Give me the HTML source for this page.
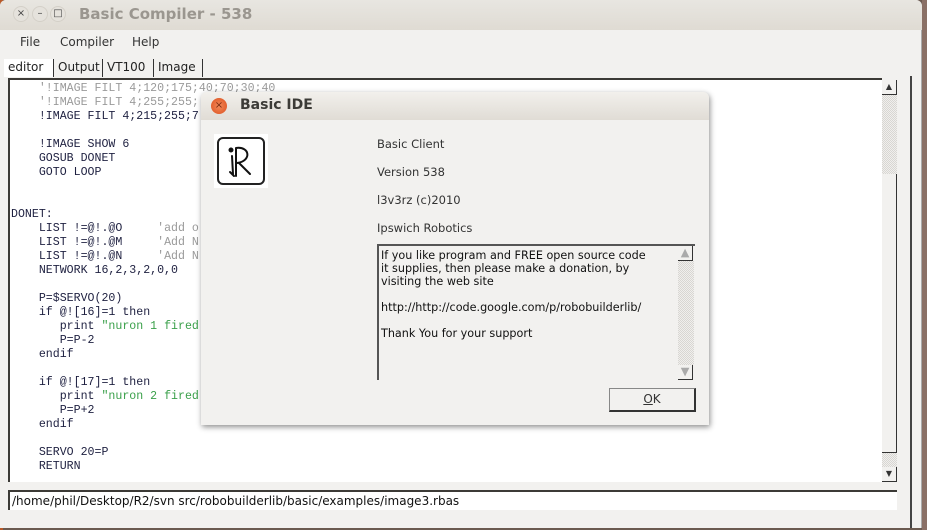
<!DOCTYPE html>
<html><head><meta charset="utf-8"><style>
*{margin:0;padding:0;box-sizing:border-box}
body{width:927px;height:530px;overflow:hidden;background:#6b5a50;position:relative;font-family:"DejaVu Sans","Liberation Sans",sans-serif}
.abs{position:absolute}
#win{left:0;top:0;width:922px;height:528px;background:#f2f1ef;border-radius:6px 6px 0 0;border-right:1px solid #aaa}
#title{left:0;top:0;width:922px;height:30px;background:linear-gradient(#e8e6e1,#dfdbd3);border-radius:6px 6px 0 0}
.wb{width:16px;height:16px;border-radius:50%;background:#e5e2dc;border:1px solid #d4d0c8;top:6px;font-size:10px;color:#444;text-align:center;line-height:14px}
#menu{left:0;top:30px;width:922px;height:22px;font-size:12px;color:#333}
.tab{top:59px;height:18px;font-size:12px;color:#222;border-right:1px solid #333;padding:1px 4px 0 4px}
#code{left:8px;top:78px;width:874px;height:404px;background:#fff;border-top:2px solid #3c3a36;border-left:2px solid #3c3a36;overflow:hidden}
#code pre{font-family:"Liberation Mono",monospace;font-size:11.6px;line-height:14px;color:#1e2040;position:absolute;left:1px;top:2px}
.c{color:#9a9a9a}.s{color:#3aa04a}
#sb{left:882px;top:80px;width:15px;height:402px;background:#f2f1ef}
.chk{background-image:repeating-conic-gradient(#d8d6d2 0 25%,#f0efed 0 50%);background-size:2px 2px}
.arr{width:15px;height:15px;background:#f2f1ef;border-right:1px solid #333;border-bottom:1px solid #333;font-size:8px;text-align:center;line-height:14px;color:#333}
#path{left:8px;top:490px;width:889px;height:20px;background:#fff;border-top:2px solid #3c3a36;border-left:2px solid #3c3a36;font-size:12px;color:#111;padding:2px 0 0 2px;font-family:"DejaVu Sans",sans-serif}
#dlg{left:201px;top:92px;width:508px;height:333px;background:#f2f1ef;border-radius:6px 6px 0 0;box-shadow:1px 2px 6px rgba(0,0,0,.45)}
#dt{left:0;top:0;width:508px;height:28px;background:linear-gradient(#f2f0ec,#e0dcd5);border-radius:6px 6px 0 0}
.lbl{left:176px;font-size:11.5px;color:#333}
#ta{left:176px;top:152px;width:318px;height:136px;border-top:2px solid #555;border-left:2px solid #555;background:#f2f1ef}
#ta div{font-size:11.2px;line-height:13px;color:#111;position:absolute;left:2px;top:3px;white-space:pre}
#ok{left:408px;top:296px;width:87px;height:24px;border:1px solid #888;border-right:2px solid #333;border-bottom:2px solid #333;font-size:12px;text-align:center;line-height:21px;color:#333}
</style></head><body>
<div class="abs" style="left:0;top:0;width:3px;height:530px;background:#b85a2a"></div>
<div class="abs" style="left:922px;top:0;width:5px;height:530px;background:#8a7066"></div>
<div id="win" class="abs">
 <div id="title" class="abs">
  <div class="abs wb" style="left:13px">×</div>
  <div class="abs wb" style="left:32px">–</div>
  <div class="abs wb" style="left:50px">□</div>
  <div class="abs" style="left:79px;top:5px;font-size:15px;font-weight:bold;color:#9a968f">Basic Compiler - 538</div>
 </div>
 <div id="menu" class="abs">
  <span class="abs" style="left:20px;top:5px">File</span>
  <span class="abs" style="left:60px;top:5px">Compiler</span>
  <span class="abs" style="left:132px;top:5px">Help</span>
 </div>
 <div class="abs tab" style="left:4px;width:50px;background:#fff">editor</div>
 <div class="abs tab" style="left:54px;width:49px">Output</div>
 <div class="abs tab" style="left:103px;width:51px">VT100</div>
 <div class="abs tab" style="left:154px;width:49px">Image</div>
 <div id="code" class="abs"><pre>    <span class="c">'!IMAGE FILT 4;120;175;40;70;30;40</span>
    <span class="c">'!IMAGE FILT 4;255;255;</span>
    !IMAGE FILT 4;215;255;7

    !IMAGE SHOW 6
    GOSUB DONET
    GOTO LOOP


DONET:
    LIST !=@!.@O     <span class="c">'add o</span>
    LIST !=@!.@M     <span class="c">'Add N</span>
    LIST !=@!.@N     <span class="c">'Add N</span>
    NETWORK 16,2,3,2,0,0

    P=$SERVO(20)
    if @![16]=1 then
       print <span class="s">"nuron 1 fired</span>
       P=P-2
    endif

    if @![17]=1 then
       print <span class="s">"nuron 2 fired</span>
       P=P+2
    endif

    SERVO 20=P
    RETURN</pre></div>
 <div id="sb" class="abs">
  <div class="abs arr" style="left:0;top:0">▲</div>
  <div class="abs chk" style="left:0;top:15px;width:15px;height:79px"></div>
  <div class="abs" style="left:0;top:94px;width:15px;height:279px;border-right:1px solid #333;border-bottom:1px solid #333"></div>
  <div class="abs chk" style="left:0;top:373px;width:15px;height:14px"></div>
  <div class="abs arr" style="left:0;top:387px">▼</div>
 </div>
 <div class="abs" style="left:910px;top:76px;width:2px;height:452px;background:#444"></div>
 <div id="path" class="abs">/home/phil/Desktop/R2/svn src/robobuilderlib/basic/examples/image3.rbas</div>
</div>
<div id="dlg" class="abs">
 <div id="dt" class="abs">
  <div class="abs" style="left:10px;top:6px;width:16px;height:16px;border-radius:50%;background:radial-gradient(#f28a5a,#dc4f1d);font-size:10px;color:#7a2a10;text-align:center;line-height:15px">×</div>
  <div class="abs" style="left:39px;top:5px;font-size:14px;font-weight:bold;color:#3c3b37">Basic IDE</div>
 </div>
 <div class="abs" style="left:13px;top:42px;width:54px;height:54px;background:#fff">
  <div class="abs" style="left:3px;top:3px;width:48px;height:48px;border:2px solid #222;border-radius:6px"></div>
  <svg class="abs" style="left:0;top:0" width="54" height="54"><g stroke="#111" stroke-width="2" fill="none" stroke-linecap="round"><path d="M18 22 L19 40 M16 38 L20 42"/><circle cx="17" cy="16" r="1.5" fill="#111"/><path d="M22 14 L22 42 M22 14 C36 12 38 27 23 29 M25 29 L36 40"/></g></svg>
 </div>
 <div class="abs lbl" style="top:45px">Basic Client</div>
 <div class="abs lbl" style="top:73px">Version 538</div>
 <div class="abs lbl" style="top:101px">l3v3rz (c)2010</div>
 <div class="abs lbl" style="top:129px">Ipswich Robotics</div>
 <div id="ta" class="abs"><div>If you like program and FREE open source code
it supplies, then please make a donation, by
visiting the web site

http://http://code.google.com/p/robobuilderlib/

Thank You for your support</div>
  <div class="abs" style="left:299px;top:0;width:16px;height:134px">
   <div class="abs arr" style="left:0;top:0;color:#aaa">▲</div>
   <div class="abs chk" style="left:0;top:15px;width:16px;height:104px"></div>
   <div class="abs arr" style="left:0;top:119px;color:#aaa">▼</div>
  </div>
 </div>
 <div id="ok" class="abs"><u>O</u>K</div>
</div>
</body></html>
